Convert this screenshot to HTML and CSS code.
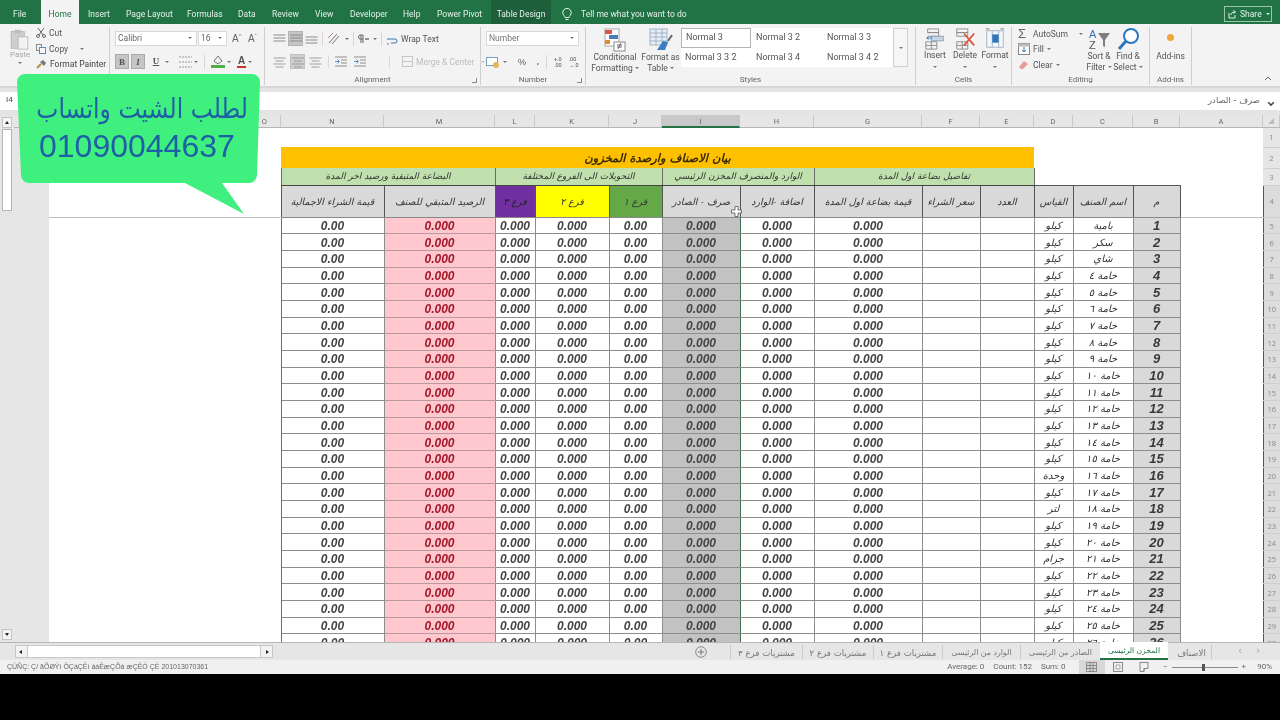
FILE: index.html
```html
<!DOCTYPE html>
<html lang="en">
<head>
<meta charset="utf-8">
<title>Excel</title>
<link rel="stylesheet" href="styles.css">
</head>
<body>
<svg class="defs" width="0" height="0">
  <symbol id="lines" viewBox="0 0 12 12"><path d="M0 2h12M2 5h8M0 8h12M2 11h8" stroke="#8a8a8a" fill="none"/></symbol>
  <symbol id="lines2" viewBox="0 0 12 12"><path d="M0 2h12M0 5h12M0 8h12" stroke="#8a8a8a" fill="none"/></symbol>
  <symbol id="indent" viewBox="0 0 12 12"><path d="M0 1h12M6 4h6M6 7h6M0 10h12" stroke="#777" fill="none"/><path d="M0 5.5h4M2.5 3.5l2 2-2 2" stroke="#2b78c2" fill="none"/></symbol>
</svg>
<div class="app">
  <header class="titlebar">
    <nav class="tabs">
      <span class="tab t-file">File</span>
      <span class="tab t-home">Home</span>
      <span class="tab t-ins">Insert</span>
      <span class="tab t-pl">Page Layout</span>
      <span class="tab t-fo">Formulas</span>
      <span class="tab t-da">Data</span>
      <span class="tab t-re">Review</span>
      <span class="tab t-vi">View</span>
      <span class="tab t-de">Developer</span>
      <span class="tab t-he">Help</span>
      <span class="tab t-pp">Power Pivot</span>
      <span class="tab t-td">Table Design</span>
      <svg class="bulb" width="10" height="13" viewBox="0 0 10 13"><path d="M3 9.5C2.6 7.8 .8 7 .8 4.6a4.2 4.2 0 0 1 8.4 0C9.200 7 7.400 7.800 7 9.500zM3.500 11.500h3" fill="none" stroke="#e8f2ec"/></svg>
      <span class="tell">Tell me what you want to do</span>
    </nav>
    <div class="share">
      <svg width="9" height="9" viewBox="0 0 9 9"><path d="M1 3v5h6V5M3 5c0-2 1-3 4-3M5.500.5L7.500 2 5.500 3.500" fill="none" stroke="#e8f2ec"/></svg>
      <span>Share</span><span class="caret-w"></span>
    </div>
  </header>

  <section class="ribbon">
    <div class="grp g-clip">
      <div class="grp-body clip-body">
        <div class="paste">
          <svg width="19" height="21" viewBox="0 0 21 24"><rect x="1" y="3" width="15" height="19" fill="#cfcfcf" stroke="#b5b5b5"/><rect x="5" y="1" width="7" height="4" fill="#bdbdbd"/><rect x="9" y="9" width="11" height="14" fill="#f2f2f2" stroke="#b9b9b9"/></svg>
          <span>Paste</span><i class="caret"></i>
        </div>
        <div class="clip-list">
          <div class="clip-item"><svg width="10" height="10" viewBox="0 0 10 10"><path d="M2 0l5 7M8 0L3 7" stroke="#666" fill="none"/><circle cx="2" cy="8" r="1.500" fill="none" stroke="#666"/><circle cx="8" cy="8" r="1.500" fill="none" stroke="#666"/></svg>Cut</div>
          <div class="clip-item"><svg width="10" height="10" viewBox="0 0 10 10"><rect x=".5" y=".5" width="5" height="6" fill="none" stroke="#8a8a8a"/><rect x="3.500" y="3.500" width="6" height="6" fill="#f6f6f6" stroke="#5f8db5"/></svg>Copy<i class="caret cc"></i></div>
          <div class="clip-item dark"><svg width="11" height="10" viewBox="0 0 11 10"><path d="M1 9l4-4" stroke="#b98a3a" stroke-width="2"/><path d="M4 3l3-2 3 3-2 3z" fill="#777"/></svg>Format Painter</div>
        </div>
      </div>
      <div class="grp-label"></div>
    </div>

    <div class="grp g-font">
      <div class="grp-body stack">
        <div class="fr">
          <div class="combo c-font">Calibri<i class="caret"></i></div>
          <div class="combo c-size">16<i class="caret"></i></div>
          <span class="aa">A<sup>^</sup></span><span class="aa a2">A<sup>ˇ</sup></span>
        </div>
        <div class="fr r2">
          <span class="bbtn on b">B</span><span class="bbtn on i">I</span><span class="bbtn u">U</span><i class="caret"></i>
          <svg class="bordicon" width="13" height="12" viewBox="0 0 13 12"><path d="M0 1h13M0 6h13M0 11h13" stroke="#999" stroke-dasharray="2 1" fill="none"/></svg><i class="caret"></i>
          <b class="vsep"></b>
          <svg class="fillicon" width="14" height="13" viewBox="0 0 14 13"><path d="M3 6l4-5 4 5-4 3z" fill="#f4f4f4" stroke="#777"/><rect x="0" y="10" width="14" height="3" fill="#4fb04a"/></svg><i class="caret"></i>
          <span class="fontcolor">A</span><i class="caret"></i>
        </div>
      </div>
      <div class="grp-label"></div>
    </div>

    <div class="grp g-align">
      <div class="grp-body stack">
        <div class="fr">
          <svg class="ic" width="13" height="12"><use href="#lines2"/></svg>
          <span class="sel"><svg width="12" height="12"><use href="#lines2"/></svg></span>
          <svg class="ic lower" width="13" height="12"><use href="#lines2"/></svg>
          <b class="vsep m"></b>
          <svg class="ic" width="14" height="13" viewBox="0 0 14 13"><path d="M2 11L10 2M5 12l7-8" stroke="#777" fill="none"/><path d="M1 6l5-5" stroke="#b178b0" fill="none"/></svg><i class="caret"></i>
          <b class="vsep m"></b>
          <svg class="ic" width="11" height="10" viewBox="0 0 11 10"><path d="M3 1v8M5 1v8M5 1H2.500a2 2 0 0 0 0 4H5" stroke="#666" fill="none"/><path d="M7 5h4" stroke="#333"/></svg><i class="caret m2"></i>
          <b class="vsep m"></b>
          <span class="wrap"><svg width="12" height="13" viewBox="0 0 12 13"><path d="M1 7h8a2 2 0 0 1 0 4H5" stroke="#3579b5" fill="none"/><path d="M1 12h2" stroke="#777"/></svg>Wrap Text</span>
        </div>
        <div class="fr r2 faded">
          <svg class="ic" width="13" height="12"><use href="#lines"/></svg>
          <span class="sel"><svg width="12" height="12"><use href="#lines"/></svg></span>
          <svg class="ic" width="13" height="12"><use href="#lines"/></svg>
          <b class="vsep m"></b>
          <svg class="ic" width="12" height="12"><use href="#indent"/></svg>
          <svg class="ic ind2" width="12" height="12"><use href="#indent"/></svg>
          <b class="vsep m3"></b>
          <span class="wrap merge"><svg width="11" height="11" viewBox="0 0 11 11"><rect x=".5" y=".5" width="10" height="10" fill="none" stroke="#bbb"/><path d="M0 5.500h11" stroke="#bbb"/></svg>Merge &amp; Center<i class="caret m4"></i></span>
        </div>
      </div>
      <div class="grp-label">Alignment<i class="launch"></i></div>
    </div>

    <div class="grp g-num">
      <div class="grp-body stack">
        <div class="fr"><div class="combo c-num">Number<i class="caret"></i></div></div>
        <div class="fr r2 numr">
          <svg width="14" height="12" viewBox="0 0 14 12"><rect x=".5" y="1.500" width="11" height="8" fill="#fff" stroke="#7aa0c0"/><circle cx="10" cy="9" r="3" fill="#e6b655"/></svg><i class="caret"></i>
          <span class="pct">%</span><span class="comma">,</span>
          <b class="vsep"></b>
          <span class="dec">+.0<br>.00</span><span class="dec">.00<br>→.0</span>
        </div>
      </div>
      <div class="grp-label">Number<i class="launch"></i></div>
    </div>

    <div class="grp g-styles">
      <div class="grp-body styles-body">
        <div class="big b-cf">
          <svg width="22" height="24" viewBox="0 0 22 24"><rect x="1" y="1" width="14" height="17" fill="#fff" stroke="#aaa"/><rect x="1" y="2" width="7" height="4" fill="#d9534f"/><rect x="5" y="7" width="9" height="4" fill="#4a7ebb"/><rect x="1" y="12" width="5" height="4" fill="#e08a3a"/><rect x="10" y="14" width="11" height="9" fill="#fff" stroke="#888"/><path d="M13 19h5M13 17h5M14 21l3-6" stroke="#333" stroke-width=".7"/></svg>
          <span>Conditional<br>Formatting <i class="caret inl"></i></span>
        </div>
        <div class="big b-ft">
          <svg width="24" height="24" viewBox="0 0 24 24"><rect x="1" y="1" width="17" height="16" fill="#e8eef5" stroke="#9fb3c8"/><path d="M1 5h17M1 9h17M1 13h17M7 1v16M13 1v16" stroke="#9fb3c8"/><path d="M8 22l6-9 5 1-3 8z" fill="#3c7fc0"/><path d="M19 13l4-6" stroke="#666" stroke-width="2"/></svg>
          <span>Format as<br>Table <i class="caret inl"></i></span>
        </div>
        <div class="gallery">
          <span class="st on">Normal 3</span><span class="st">Normal 3 2</span><span class="st">Normal 3 3</span>
          <span class="st">Normal 3 3 2</span><span class="st">Normal 3 4</span><span class="st">Normal 3 4 2</span>
        </div>
        <div class="gal-more"><i class="caret"></i></div>
      </div>
      <div class="grp-label">Styles</div>
    </div>

    <div class="grp g-cells">
      <div class="grp-body cells-body">
        <div class="big c3"><svg width="22" height="22" viewBox="0 0 22 24"><path d="M3 1h12v4H3zM3 5h12v4H3M1 15h12v8H1zM7 15v8M1 19h12" fill="none" stroke="#8a8a8a"/><rect x="7" y="9" width="13" height="5" fill="#c9d6e3" stroke="#8a9fb3"/><path d="M2 11h6M4 9.500l-2 1.500 2 1.500" stroke="#2d78bd" fill="none"/></svg><span>Insert</span><i class="caret"></i></div>
        <div class="big c3"><svg width="24" height="22" viewBox="0 0 24 24"><path d="M3 1h12v4H3zM3 5h12v4H3zM3 15h12v8H3zM9 15v8M3 19h12" fill="none" stroke="#8a8a8a"/><path d="M11 6l11 13M22 6L11 19" stroke="#d9573b" stroke-width="2"/></svg><span>Delete</span><i class="caret"></i></div>
        <div class="big c3"><svg width="22" height="22" viewBox="0 0 22 24"><rect x="2" y="3" width="18" height="18" fill="#f4f7fa" stroke="#9fb3c8"/><path d="M8 3v18M15 3v18" stroke="#9fb3c8"/><rect x="8" y="7" width="7" height="9" fill="#2f76b9"/><path d="M1 1h4M17 1h4" stroke="#777"/></svg><span>Format</span><i class="caret"></i></div>
      </div>
      <div class="grp-label">Cells</div>
    </div>

    <div class="grp g-edit">
      <div class="grp-body edit-body">
        <div class="edit-list">
          <div class="clip-item"><span class="sigma">Σ</span>AutoSum<i class="caret auto"></i></div>
          <div class="clip-item"><svg width="12" height="12" viewBox="0 0 12 12"><rect x=".5" y=".5" width="11" height="11" fill="#fff" stroke="#888"/><rect x=".5" y=".5" width="11" height="3" fill="#bbb"/><path d="M6 4v5M4 7l2 2 2-2" stroke="#2d78bd" fill="none"/></svg>Fill<i class="caret"></i></div>
          <div class="clip-item"><svg width="12" height="10" viewBox="0 0 12 10"><path d="M1 7l5-6 4 3-5 5H3z" fill="#e79a9a"/></svg>Clear<i class="caret"></i></div>
        </div>
        <div class="big sort"><svg class="sorticon" width="22" height="24" viewBox="0 0 22 24"><text x="1" y="11" class="az a">A</text><text x="1" y="22" class="az z">Z</text><path d="M10 6h12l-5 7v7l-2-1v-6z" fill="#7f7f7f"/></svg><span>Sort &amp;<br>Filter <i class="caret inl"></i></span></div>
        <div class="big find"><svg width="24" height="24" viewBox="0 0 24 24"><circle cx="15" cy="9" r="7" fill="#fff" stroke="#2d78bd" stroke-width="2"/><path d="M10 14l-7 8" stroke="#2d78bd" stroke-width="3"/></svg><span>Find &amp;<br>Select <i class="caret inl"></i></span></div>
      </div>
      <div class="grp-label">Editing</div>
    </div>

    <div class="grp g-add">
      <div class="grp-body add-body"><i class="dot"></i><span>Add-ins</span></div>
      <div class="grp-label">Add-ins</div>
    </div>
    <div class="collapse">
      <svg width="8" height="5" viewBox="0 0 8 5"><path d="M1 4l3-3 3 3" fill="none" stroke="#666"/></svg>
    </div>
  </section>

  <div class="formula">
    <span class="namebox">I4</span>
    <span class="fx" dir="rtl">صرف - الصادر</span>
    <svg width="7" height="5" viewBox="0 0 7 5"><path d="M1 1l2.500 2.500L6 1" fill="none" stroke="#444" stroke-width="1.300"/></svg>
  </div>

  <div class="work">
    <aside class="vscroll">
      <span class="sb-btn"><i class="tri up"></i></span>
      <span class="thumb"></span>
      <span class="sb-btn end"><i class="tri down"></i></span>
    </aside>
    <div class="gridwrap">
      <div class="colhead">
        <span class="ch w-blank"><em>O</em></span>
        <span class="ch w-n">N</span><span class="ch w-m">M</span><span class="ch w-l">L</span><span class="ch w-k">K</span><span class="ch w-j">J</span>
        <span class="ch w-i active">I</span>
        <span class="ch w-h">H</span><span class="ch w-g">G</span><span class="ch w-f">F</span><span class="ch w-e">E</span><span class="ch w-d">D</span><span class="ch w-c">C</span><span class="ch w-b">B</span><span class="ch w-a">A</span>
        <span class="ch w-r"><i class="corner"></i></span>
      </div>
      <div class="sheet">
        <table class="tbl">
          <colgroup>
            <col class="k-gray"><col class="k-blank"><col class="k-n"><col class="k-m"><col class="k-l"><col class="k-k"><col class="k-j"><col class="k-i"><col class="k-h"><col class="k-g"><col class="k-f"><col class="k-e"><col class="k-d"><col class="k-c"><col class="k-b"><col class="k-a"><col class="k-r">
          </colgroup>
          <tbody>
            <tr class="r1"><td class="gray"></td><td colspan="15"></td><td class="rh">1</td></tr>
            <tr class="r2"><td class="gray"></td><td></td><td class="title" colspan="10" dir="rtl">بيان الاصناف وارصدة المخزون</td><td colspan="4"></td><td class="rh">2</td></tr>
            <tr class="r3"><td class="gray"></td><td></td><td class="sub" colspan="2" dir="rtl">البضاعة المتبقية ورصيد اخر المدة</td><td class="sub" colspan="3" dir="rtl">التحويلات الى الفروع المختلفة</td><td class="sub" colspan="2" dir="rtl">الوارد والمنصرف المخزن الرئيسي</td><td class="sub" colspan="3" dir="rtl">تفاصيل بضاعة اول المدة</td><td colspan="4"></td><td class="rh">3</td></tr>
            <tr class="r4"><td class="gray"></td><td class="fz"></td><td class="hd" dir="rtl">قيمة الشراء الاجمالية</td><td class="hd" dir="rtl">الرصيد المتبقي للصنف</td><td class="hd purple" dir="rtl">فرع ٣</td><td class="hd yellow" dir="rtl">فرع ٢</td><td class="hd green" dir="rtl">فرع ١</td><td class="hd" dir="rtl">صرف - الصادر</td><td class="hd" dir="rtl">اضافة -الوارد</td><td class="hd" dir="rtl">قيمة بضاعة اول المدة</td><td class="hd" dir="rtl">سعر الشراء</td><td class="hd" dir="rtl">العدد</td><td class="hd" dir="rtl">القياس</td><td class="hd" dir="rtl">اسم الصنف</td><td class="hd" dir="rtl">م</td><td class="fz"></td><td class="rh sl">4</td></tr>
            <tr class="d"><td class="gray"></td><td></td><td>0.00</td><td>0.000</td><td>0.000</td><td>0.000</td><td>0.00</td><td>0.000</td><td>0.000</td><td>0.000</td><td></td><td></td><td dir="rtl">كيلو</td><td dir="rtl">بامية</td><td>1</td><td></td><td class="rh sl">5</td></tr>
            <tr class="d"><td class="gray"></td><td></td><td>0.00</td><td>0.000</td><td>0.000</td><td>0.000</td><td>0.00</td><td>0.000</td><td>0.000</td><td>0.000</td><td></td><td></td><td dir="rtl">كيلو</td><td dir="rtl">سكر</td><td>2</td><td></td><td class="rh sl">6</td></tr>
            <tr class="d"><td class="gray"></td><td></td><td>0.00</td><td>0.000</td><td>0.000</td><td>0.000</td><td>0.00</td><td>0.000</td><td>0.000</td><td>0.000</td><td></td><td></td><td dir="rtl">كيلو</td><td dir="rtl">شاي</td><td>3</td><td></td><td class="rh sl">7</td></tr>
            <tr class="d"><td class="gray"></td><td></td><td>0.00</td><td>0.000</td><td>0.000</td><td>0.000</td><td>0.00</td><td>0.000</td><td>0.000</td><td>0.000</td><td></td><td></td><td dir="rtl">كيلو</td><td dir="rtl">خامة ٤</td><td>4</td><td></td><td class="rh sl">8</td></tr>
            <tr class="d"><td class="gray"></td><td></td><td>0.00</td><td>0.000</td><td>0.000</td><td>0.000</td><td>0.00</td><td>0.000</td><td>0.000</td><td>0.000</td><td></td><td></td><td dir="rtl">كيلو</td><td dir="rtl">خامة ٥</td><td>5</td><td></td><td class="rh sl">9</td></tr>
            <tr class="d"><td class="gray"></td><td></td><td>0.00</td><td>0.000</td><td>0.000</td><td>0.000</td><td>0.00</td><td>0.000</td><td>0.000</td><td>0.000</td><td></td><td></td><td dir="rtl">كيلو</td><td dir="rtl">خامة ٦</td><td>6</td><td></td><td class="rh sl">10</td></tr>
            <tr class="d"><td class="gray"></td><td></td><td>0.00</td><td>0.000</td><td>0.000</td><td>0.000</td><td>0.00</td><td>0.000</td><td>0.000</td><td>0.000</td><td></td><td></td><td dir="rtl">كيلو</td><td dir="rtl">خامة ٧</td><td>7</td><td></td><td class="rh sl">11</td></tr>
            <tr class="d"><td class="gray"></td><td></td><td>0.00</td><td>0.000</td><td>0.000</td><td>0.000</td><td>0.00</td><td>0.000</td><td>0.000</td><td>0.000</td><td></td><td></td><td dir="rtl">كيلو</td><td dir="rtl">خامة ٨</td><td>8</td><td></td><td class="rh sl">12</td></tr>
            <tr class="d"><td class="gray"></td><td></td><td>0.00</td><td>0.000</td><td>0.000</td><td>0.000</td><td>0.00</td><td>0.000</td><td>0.000</td><td>0.000</td><td></td><td></td><td dir="rtl">كيلو</td><td dir="rtl">خامة ٩</td><td>9</td><td></td><td class="rh sl">13</td></tr>
            <tr class="d"><td class="gray"></td><td></td><td>0.00</td><td>0.000</td><td>0.000</td><td>0.000</td><td>0.00</td><td>0.000</td><td>0.000</td><td>0.000</td><td></td><td></td><td dir="rtl">كيلو</td><td dir="rtl">خامة ١٠</td><td>10</td><td></td><td class="rh sl">14</td></tr>
            <tr class="d"><td class="gray"></td><td></td><td>0.00</td><td>0.000</td><td>0.000</td><td>0.000</td><td>0.00</td><td>0.000</td><td>0.000</td><td>0.000</td><td></td><td></td><td dir="rtl">كيلو</td><td dir="rtl">خامة ١١</td><td>11</td><td></td><td class="rh sl">15</td></tr>
            <tr class="d"><td class="gray"></td><td></td><td>0.00</td><td>0.000</td><td>0.000</td><td>0.000</td><td>0.00</td><td>0.000</td><td>0.000</td><td>0.000</td><td></td><td></td><td dir="rtl">كيلو</td><td dir="rtl">خامة ١٢</td><td>12</td><td></td><td class="rh sl">16</td></tr>
            <tr class="d"><td class="gray"></td><td></td><td>0.00</td><td>0.000</td><td>0.000</td><td>0.000</td><td>0.00</td><td>0.000</td><td>0.000</td><td>0.000</td><td></td><td></td><td dir="rtl">كيلو</td><td dir="rtl">خامة ١٣</td><td>13</td><td></td><td class="rh sl">17</td></tr>
            <tr class="d"><td class="gray"></td><td></td><td>0.00</td><td>0.000</td><td>0.000</td><td>0.000</td><td>0.00</td><td>0.000</td><td>0.000</td><td>0.000</td><td></td><td></td><td dir="rtl">كيلو</td><td dir="rtl">خامة ١٤</td><td>14</td><td></td><td class="rh sl">18</td></tr>
            <tr class="d"><td class="gray"></td><td></td><td>0.00</td><td>0.000</td><td>0.000</td><td>0.000</td><td>0.00</td><td>0.000</td><td>0.000</td><td>0.000</td><td></td><td></td><td dir="rtl">كيلو</td><td dir="rtl">خامة ١٥</td><td>15</td><td></td><td class="rh sl">19</td></tr>
            <tr class="d"><td class="gray"></td><td></td><td>0.00</td><td>0.000</td><td>0.000</td><td>0.000</td><td>0.00</td><td>0.000</td><td>0.000</td><td>0.000</td><td></td><td></td><td dir="rtl">وحدة</td><td dir="rtl">خامة ١٦</td><td>16</td><td></td><td class="rh sl">20</td></tr>
            <tr class="d"><td class="gray"></td><td></td><td>0.00</td><td>0.000</td><td>0.000</td><td>0.000</td><td>0.00</td><td>0.000</td><td>0.000</td><td>0.000</td><td></td><td></td><td dir="rtl">كيلو</td><td dir="rtl">خامة ١٧</td><td>17</td><td></td><td class="rh sl">21</td></tr>
            <tr class="d"><td class="gray"></td><td></td><td>0.00</td><td>0.000</td><td>0.000</td><td>0.000</td><td>0.00</td><td>0.000</td><td>0.000</td><td>0.000</td><td></td><td></td><td dir="rtl">لتر</td><td dir="rtl">خامة ١٨</td><td>18</td><td></td><td class="rh sl">22</td></tr>
            <tr class="d"><td class="gray"></td><td></td><td>0.00</td><td>0.000</td><td>0.000</td><td>0.000</td><td>0.00</td><td>0.000</td><td>0.000</td><td>0.000</td><td></td><td></td><td dir="rtl">كيلو</td><td dir="rtl">خامة ١٩</td><td>19</td><td></td><td class="rh sl">23</td></tr>
            <tr class="d"><td class="gray"></td><td></td><td>0.00</td><td>0.000</td><td>0.000</td><td>0.000</td><td>0.00</td><td>0.000</td><td>0.000</td><td>0.000</td><td></td><td></td><td dir="rtl">كيلو</td><td dir="rtl">خامة ٢٠</td><td>20</td><td></td><td class="rh sl">24</td></tr>
            <tr class="d"><td class="gray"></td><td></td><td>0.00</td><td>0.000</td><td>0.000</td><td>0.000</td><td>0.00</td><td>0.000</td><td>0.000</td><td>0.000</td><td></td><td></td><td dir="rtl">جرام</td><td dir="rtl">خامة ٢١</td><td>21</td><td></td><td class="rh sl">25</td></tr>
            <tr class="d"><td class="gray"></td><td></td><td>0.00</td><td>0.000</td><td>0.000</td><td>0.000</td><td>0.00</td><td>0.000</td><td>0.000</td><td>0.000</td><td></td><td></td><td dir="rtl">كيلو</td><td dir="rtl">خامة ٢٢</td><td>22</td><td></td><td class="rh sl">26</td></tr>
            <tr class="d"><td class="gray"></td><td></td><td>0.00</td><td>0.000</td><td>0.000</td><td>0.000</td><td>0.00</td><td>0.000</td><td>0.000</td><td>0.000</td><td></td><td></td><td dir="rtl">كيلو</td><td dir="rtl">خامة ٢٣</td><td>23</td><td></td><td class="rh sl">27</td></tr>
            <tr class="d"><td class="gray"></td><td></td><td>0.00</td><td>0.000</td><td>0.000</td><td>0.000</td><td>0.00</td><td>0.000</td><td>0.000</td><td>0.000</td><td></td><td></td><td dir="rtl">كيلو</td><td dir="rtl">خامة ٢٤</td><td>24</td><td></td><td class="rh sl">28</td></tr>
            <tr class="d"><td class="gray"></td><td></td><td>0.00</td><td>0.000</td><td>0.000</td><td>0.000</td><td>0.00</td><td>0.000</td><td>0.000</td><td>0.000</td><td></td><td></td><td dir="rtl">كيلو</td><td dir="rtl">خامة ٢٥</td><td>25</td><td></td><td class="rh sl">29</td></tr>
            <tr class="d"><td class="gray"></td><td></td><td>0.00</td><td>0.000</td><td>0.000</td><td>0.000</td><td>0.00</td><td>0.000</td><td>0.000</td><td>0.000</td><td></td><td></td><td dir="rtl">كيلو</td><td dir="rtl">خامة ٢٦</td><td>26</td><td></td><td class="rh sl">30</td></tr>
          </tbody>
        </table>
      </div>
    </div>
  </div>

  <div class="tabbar">
    <div class="hscroll"><i class="tri left"></i><span class="track"></span><i class="tri right"></i></div>
    <div class="sheets">
      <svg class="plus" width="12" height="12" viewBox="0 0 12 12"><circle cx="6" cy="6" r="5.300" fill="none" stroke="#8a8a8a"/><path d="M3 6h6M6 3v6" stroke="#777"/></svg>
      <span class="stab s1" dir="rtl">مشتريات فرع ٣</span>
      <span class="stab s2" dir="rtl">مشتريات فرع ٢</span>
      <span class="stab s3" dir="rtl">مشتريات فرع ١</span>
      <span class="stab s4" dir="rtl">الوارد من الرئيسى</span>
      <span class="stab s5" dir="rtl">الصادر من الرئيسى</span>
      <span class="stab s6 act" dir="rtl">المخزن الرئيسى</span>
      <span class="stab s7" dir="rtl">الاصناف</span>
      <span class="nav n1">‹</span><span class="nav">›</span>
    </div>
  </div>

  <footer class="status">
    <span class="st-msg">ÇÚÑÇ: Ç/ ãÕØÝì ÔÇáÇÊí ááÊæÇÕá æÇÊÓ ÇÈ 201013070361</span>
    <div class="st-right">
      <span>Average: 0</span><span>Count: 152</span><span>Sum: 0</span>
      <span class="view on"><svg width="11" height="10" viewBox="0 0 11 10"><path d="M.5.500h10v9H.5zM.5 3.500h10M.5 6.500h10M4 .5v9M7 .5v9" fill="none" stroke="#777" stroke-width=".8"/></svg></span>
      <span class="view"><svg width="10" height="10" viewBox="0 0 10 10"><path d="M.5.500h9v9h-9z" fill="none" stroke="#888"/><path d="M3 3h4v4H3z" fill="none" stroke="#aaa"/></svg></span>
      <span class="view"><svg width="10" height="10" viewBox="0 0 10 10"><path d="M1 .5h8v6H5v3H1zM5 6.500v3" fill="none" stroke="#888"/></svg></span>
      <span class="zoomctl">−<span class="slider"><i></i></span>+</span>
      <span class="pctz">90%</span>
    </div>
  </footer>

  <svg class="cursor" width="11" height="11" viewBox="0 0 11 11"><path d="M4 .5h3v3.500h3.500v3H7v3.500H4V7H.5V4H4z" fill="#fff" stroke="#555" stroke-width=".8"/></svg>

  <aside class="bubble">
    <svg class="bubble-shape" width="246" height="142" viewBox="0 0 246 142"><path d="M8 0H235a8 8 0 0 1 8 8L240 101a8 8 0 0 1-8 8H205L227 140 168 109H12a8 8 0 0 1-8-8L0 8a8 8 0 0 1 8-8z" fill="#3ff07e"/></svg>
    <p class="b-ar" dir="rtl">لطلب الشيت واتساب</p>
    <p class="b-num">01090044637</p>
  </aside>
</div>
</body>
</html>
```

FILE: styles.css
```css
* { box-sizing: border-box; }
html, body { margin: 0; padding: 0; background: #000; }
body { width: 1280px; height: 720px; overflow: hidden; font-family: Roboto, "Liberation Sans", sans-serif; }
.defs { position: absolute; }
.app { position: relative; width: 1280px; height: 674px; background: #f0f0f0; display: flex; flex-direction: column; overflow: hidden; filter: blur(.35px); color: #444; }

/* title bar */
.titlebar { height: 24px; background: #217346; display: flex; justify-content: space-between; flex: none; }
.tabs { display: flex; align-items: stretch; }
.tab { color: #e6f0ea; font-size: 8.5px; line-height: 20px; padding-top: 4px; white-space: nowrap; }
.t-file { margin-left: 13px; width: 28px; }
.t-home { background: #f3f3f3; color: #217346; width: 38px; text-align: center; }
.t-ins { margin-left: 9px; width: 38px; }
.t-pl { width: 61px; }
.t-fo { width: 51px; }
.t-da { width: 34px; }
.t-re { width: 43px; }
.t-vi { width: 35px; }
.t-de { width: 53px; }
.t-he { width: 34px; }
.t-pp { width: 54px; }
.t-td { background: #1d5e3b; width: 60px; text-align: center; }
.bulb { margin: 8px 0 0 11px; }
.tell { color: #e6f0ea; font-size: 8.5px; line-height: 20px; padding-top: 4px; margin-left: 9px; }
.share { margin: 6px 8px 0 0; width: 48px; height: 16px; border: 1px solid #9cc4ad; color: #e6f0ea; font-size: 8.5px; display: flex; align-items: center; gap: 3px; padding-left: 3px; }
.caret-w { border: 2px solid transparent; border-top-color: #e6f0ea; margin-top: 2px; margin-left: 1px; }

/* ribbon */
.ribbon { height: 62px; background: #f3f3f3; display: flex; flex: none; font-size: 8.5px; color: #555; }
.grp { display: flex; flex-direction: column; border-right: 1px solid #cfcfcf; margin: 3px 0 1px; height: 58px; }
.g-clip { width: 110px; margin-right: 0; }
.g-font { width: 155px; }
.g-align { width: 216px; }
.g-num { width: 105px; }
.g-styles { width: 330px; }
.g-cells { width: 96px; }
.g-edit { width: 138px; }
.g-add { width: 42px; }
.grp-body { flex: 1; min-height: 0; }
.grp-label { height: 10px; text-align: center; font-size: 8px; line-height: 10px; color: #666; position: relative; }
.launch { position: absolute; right: 3px; top: 3px; width: 5px; height: 5px; border-right: 1px solid #888; border-bottom: 1px solid #888; }
.caret { display: inline-block; border: 2px solid transparent; border-top: 2.500px solid #777; border-bottom: 0; width: 0; height: 0; }
.caret.inl { vertical-align: middle; }

.clip-body { display: flex; padding-left: 10px; }
.paste { width: 26px; display: flex; flex-direction: column; align-items: flex-start; padding-top: 2px; color: #a8a8a8; font-size: 8px; line-height: 9px; }
.paste .caret { margin: 3px 0 0 8px; }
.clip-list { display: flex; flex-direction: column; gap: 3.500px; }
.clip-item { display: flex; align-items: center; gap: 3px; height: 12px; white-space: nowrap; font-size: 8.500px; }
.clip-item.dark { color: #444; }
.cc { margin-left: 9px; }
.g-clip .clip-item { gap: 3px; }

.stack { display: flex; flex-direction: column; gap: 5px; padding-top: 4px; }
.fr { display: flex; align-items: center; height: 15px; flex: none; }
.g-font .fr { padding-left: 5px; }
.combo { background: #fff; border: 1px solid #d8d8d8; height: 15px; line-height: 13px; font-size: 8.500px; padding-left: 2px; position: relative; color: #666; }
.combo .caret { position: absolute; right: 4px; top: 5px; }
.c-font { width: 82px; }
.c-size { width: 29px; margin-left: 1px; }
.c-num { width: 93px; color: #777; }
.aa { font-size: 10px; margin-left: 5px; width: 10px; color: #666; font-family: "Liberation Sans", sans-serif; }
.aa.a2 { margin-left: 6px; }
.aa sup { font-size: 6px; line-height: 0; color: #c05a2e; }
.r2 { gap: 2px; }
.bbtn { width: 14px; height: 15px; font-family: "Liberation Serif", serif; font-size: 9px; text-align: center; line-height: 14px; color: #555; }
.bbtn.on { background: #c6c6c6; border: 1px solid #ababab; }
.bbtn.b { font-weight: 700; }
.bbtn.i { font-style: italic; font-weight: 700; }
.bbtn.u { text-decoration: underline; font-weight: 700; margin-left: 2px; }
.bordicon { margin-left: 8px; }
.vsep { width: 1px; height: 14px; background: #d6d6d6; margin: 0 4px; flex: none; }
.fillicon { margin-left: 0; }
.fontcolor { font-family: "Liberation Sans", sans-serif; font-size: 10px; font-weight: 700; color: #555; border-bottom: 2.500px solid #c9312d; line-height: 10px; margin-left: 4px; padding: 0 1px; }

.g-align .fr { padding-left: 8px; }
.ic { flex: none; }
.ic.lower { margin-top: 4px; }
.sel { width: 15px; height: 15px; background: #c6c6c6; border: 1px solid #b4b4b4; display: flex; align-items: center; justify-content: center; margin: 0 2px; flex: none; }
.vsep.m { margin: 0 4px; }
.vsep.m3 { margin: 0 10px 0 21px; }
.ind2 { margin-left: 5px; }
.m2 { margin-left: 4px; }
.g-align .fr .caret { margin-left: 4px; }
.wrap { display: flex; align-items: center; gap: 3px; white-space: nowrap; font-size: 8.500px; color: #555; }
.merge { color: #b0b0b0; }
.merge .m4 { margin-left: 6px; border-top-color: #bbb; }
.faded { opacity: .8; }

.g-num .fr { padding-left: 5px; }
.numr { gap: 3px; font-size: 8px; }
.pct { font-size: 9px; margin-left: 8px; font-family: "Liberation Sans", sans-serif; }
.comma { margin-left: 8px; font-weight: 700; }
.dec { font-size: 5.500px; line-height: 6px; margin-right: 4px; }

.styles-body { display: flex; padding: 1px 0 0 4px; }
.big { display: flex; flex-direction: column; align-items: center; text-align: center; font-size: 8.500px; line-height: 10.500px; color: #555; white-space: nowrap; }
.big svg { flex: none; }
.b-cf { width: 50px; }
.b-ft { width: 41px; }
.gallery { width: 212px; height: 39px; background: #fff; display: grid; grid-template-columns: repeat(3, 71px); grid-template-rows: 20px 19px; font-size: 9px; color: #555; flex: none; }
.st { padding-left: 4px; line-height: 19px; white-space: nowrap; }
.st.on { border: 1px solid #b5b5b5; width: 70px; line-height: 17px; padding-left: 4px; }
.gal-more { width: 15px; height: 39px; border: 1px solid #cfcfcf; display: flex; align-items: center; justify-content: center; background: #f6f6f6; flex: none; }

.cells-body { display: flex; padding: 1px 0 0 4px; }
.c3 { width: 30px; gap: 0; }
.c3 .caret { margin-top: 5px; }
.edit-body { display: flex; padding: 0 0 0 6px; }
.edit-list { width: 66px; display: flex; flex-direction: column; gap: 2.500px; }
.edit-list .clip-item { font-size: 8.500px; color: #555; height: 13px; }
.sigma { font-family: "Liberation Sans", sans-serif; font-size: 13px; line-height: 12px; color: #666; width: 12px; }
.auto { margin-left: 8px; }
.sort { width: 30px; }
.find { width: 34px; margin-left: -3px; }
.az { font-family: "Liberation Sans", sans-serif; font-size: 11px; font-weight: 400; }
.az.a { fill: #3573b5; }
.az.z { fill: #555; }
.add-body { display: flex; flex-direction: column; align-items: center; gap: 10px; padding-top: 7px; font-size: 8.500px; }
.dot { width: 7px; height: 7px; border-radius: 50%; background: #f0a53a; }
.collapse { flex: 1; display: flex; justify-content: flex-end; align-items: flex-end; padding: 0 8px 5px 0; }

/* formula bar */
.formula { height: 29px; flex: none; background: #e4e4e4; border-top: 2px solid #d6d6d6; padding: 4px 0 5px; display: flex; align-items: stretch; }
.namebox { width: 60px; background: #fff; font-size: 8px; padding: 3px 0 0 6px; }
.fx { flex: 1; background: #fff; font-size: 8.500px; line-height: 17px; color: #666; padding-right: 2px; font-family: "DejaVu Sans", sans-serif; }
.formula svg { background: #fff; width: 18px; padding: 6px 5px 0 5px; height: 18px; }

/* sheet */
.work { flex: 1; min-height: 0; display: flex; }
.vscroll { width: 14px; background: #e6e6e6; position: relative; flex: none; display: flex; flex-direction: column; align-items: center; padding: 2px 0; }
.sb-btn { width: 10px; height: 11px; background: #f4f4f4; border: 1px solid #c4c4c4; display: flex; align-items: center; justify-content: center; flex: none; }
.thumb { width: 10px; height: 82px; background: #fff; border: 1px solid #b5b5b5; margin-top: 1px; flex: none; }
.sb-btn.end { margin-top: auto; }
.tri { display: block; width: 0; height: 0; border: 2.500px solid transparent; }
.tri.up { border-bottom: 3px solid #222; border-top: 0; }
.tri.down { border-top: 3px solid #222; border-bottom: 0; }
.gridwrap { flex: 1; min-width: 0; display: flex; flex-direction: column; }
.colhead { height: 13px; background: #e6e6e6; border-bottom: 1px solid #b5b5b5; display: flex; flex: none; font-size: 7.500px; color: #666; line-height: 13px; }
.ch { text-align: center; border-right: 1px solid #c8c8c8; position: relative; flex: none; }
.ch em { font-style: normal; position: absolute; right: 13px; }
.ch.active { background: #c8c8c8; border-bottom: 2px solid #217346; height: 13px; }
.w-blank { width: 267px; }
.w-n { width: 103px; } .w-m { width: 111px; } .w-l { width: 40px; } .w-k { width: 74px; } .w-j { width: 53px; } .w-i { width: 78px; } .w-h { width: 74px; } .w-g { width: 108px; } .w-f { width: 58px; } .w-e { width: 54px; } .w-d { width: 39px; } .w-c { width: 60px; } .w-b { width: 47px; } .w-a { width: 83px; } .w-r { width: 17px; }
.corner { position: absolute; right: 5px; top: 3px; border: 3px solid transparent; border-right-color: #bbb; border-bottom-color: #bbb; }
.sheet { flex: 1; min-height: 0; overflow: hidden; background: #fff; }

.tbl { width: 1266px; table-layout: fixed; border-collapse: collapse; font-family: "DejaVu Sans", sans-serif; color: #333; }
.k-gray { width: 35px; } .k-blank { width: 232px; } .k-n { width: 103px; } .k-m { width: 111px; } .k-l { width: 40px; } .k-k { width: 74px; } .k-j { width: 53px; } .k-i { width: 78px; } .k-h { width: 74px; } .k-g { width: 108px; } .k-f { width: 58px; } .k-e { width: 54px; } .k-d { width: 39px; } .k-c { width: 60px; } .k-b { width: 47px; } .k-a { width: 83px; } .k-r { width: 17px; }
.tbl td { padding: 0; overflow: hidden; white-space: nowrap; text-align: center; }
.r1 { height: 19px; }
.r2 { height: 21px; }
.r3 { height: 17px; }
.r4 { height: 32px; }
.d { height: 16.680px; }
.gray { background: #e6e6e6; }
.rh { background: #e6e6e6; color: #888; font: 7.500px "Open Sans", sans-serif; border-bottom: 1px solid #cfcfcf; }
.tbl .rh.sl { background: #dcdcdc; border-left: 1.500px solid #217346; }
.title { background: #ffc000; font-size: 11.500px; font-weight: 700; font-style: italic; color: #3a2c00; padding-top: 2px; }
.sub { background: #c0e0ae; font-size: 9px; font-style: italic; color: #333; border-left: 1px solid #6a6a6a; border-right: 1px solid #6a6a6a; border-bottom: 1px solid #444; }
.hd { background: #d9d9d9; font-size: 9.500px; font-style: italic; color: #333; border: 1px solid #555; border-bottom-color: #888; }
.hd.purple { background: #7030a0; color: #222; }
.hd.yellow { background: #ffff00; }
.hd.green { background: #65a848; }
.fz { border-bottom: 1px solid #bdbdbd; }

.d td { border-bottom: 1px solid #8d8d8d; font-family: "Liberation Sans", sans-serif; font-size: 12px; font-weight: 700; font-style: italic; line-height: 14px; color: #444; border-right: 1px solid #8d8d8d; }
.tbl .d td { padding-top: 1px; }
.d td:nth-child(1), .d td:nth-child(2), .d td:nth-child(16), .d td:nth-child(17) { border-bottom: 0; border-right: 0; }
.d td:nth-child(2) { border-right: 1px solid #6d6d6d; }
.d td:nth-child(4) { background: #ffc7ce; color: #a0182a; border-bottom-color: #b9999d; }
.d td:nth-child(8) { background: #c2c2c2; border-left: 1px solid #3f6f4f; border-right: 1px solid #3f6f4f; }
.d td:nth-child(13), .d td:nth-child(14) { font-family: "DejaVu Sans", sans-serif; font-weight: 400; font-size: 10px; color: #333; }
.d td:nth-child(15) { background: #d9d9d9; font-size: 13px; color: #3a3a3a; border-left: 1px solid #555; border-right: 1px solid #8d8d8d; }
.d td.rh { font: 7.500px "Open Sans", sans-serif; color: #888; border-bottom: 1px solid #cfcfcf; }

/* sheet tabs */
.tabbar { height: 18px; flex: none; background: #e6e6e6; border-top: 1px solid #b5b5b5; display: flex; }
.hscroll { margin: 2px 0 0 15px; width: 258px; height: 13px; display: flex; align-items: center; justify-content: space-between; padding: 0 3px; border: 1px solid #c8c8c8; background: #f2f2f2; flex: none; }
.track { flex: 1; height: 11px; background: #fff; margin: 0 5px; border-left: 1px solid #c8c8c8; border-right: 1px solid #c8c8c8; }
.tri.left { border-right: 3px solid #222; border-left: 0; }
.tri.right { border-left: 3px solid #222; border-right: 0; }
.sheets { flex: 1; display: flex; align-items: stretch; font-family: "DejaVu Sans", sans-serif; font-size: 8.600px; color: #777; padding-left: 422px; }
.plus { margin: 3px 23px 0 0; flex: none; }
.stab { text-align: center; line-height: 16px; border-left: 1px solid #cacaca; flex: none; white-space: nowrap; height: 14px; margin-top: 2px; }
.s1 { width: 72px; } .s2 { width: 71px; } .s3 { width: 69px; } .s4 { width: 78px; font-size: 7.800px; } .s5 { width: 80px; font-size: 7.800px; }
.s6.act { width: 68px; height: 18px; margin-top: -1px; background: #fff; color: #217346; border-bottom: 2px solid #217346; border-left: 0; line-height: 17px; font-weight: 400; font-size: 7.600px; }
.s7 { width: 40px; border-left: 0; border-right: 1px solid #cacaca; margin-left: 4px; }
.nav { width: 18px; text-align: center; line-height: 15px; color: #aaa; font-size: 10px; }
.n1 { margin-left: 19px; }

/* status */
.status { height: 14px; flex: none; background: #f0f0f0; display: flex; justify-content: space-between; font-size: 8px; color: #666; line-height: 14px; padding-left: 7px; }
.st-msg { font-family: "Liberation Sans", sans-serif; font-size: 7px; }
.st-right { display: flex; align-items: center; gap: 9px; padding-right: 8px; }
.view { width: 26px; height: 14px; display: flex; align-items: center; justify-content: center; margin: 0 -4.500px; }
.view.on { background: #d8d8d8; margin-left: 4px; }
.zoomctl { display: flex; align-items: center; gap: 4px; margin-left: 2px; }
.slider { width: 66px; height: 1px; background: #888; position: relative; }
.slider i { position: absolute; left: 30px; top: -3px; width: 3px; height: 7px; background: #555; }
.pctz { margin-left: 2px; }

/* overlays */
.cursor { position: absolute; left: 731px; top: 206px; }
.bubble { position: absolute; left: 17px; top: 74px; width: 246px; height: 142px; }
.bubble-shape { position: absolute; left: 0; top: 0; }
.bubble p { position: relative; margin: 0; white-space: nowrap; color: #1f5fa6; }
.b-ar { width: 231px; font: 23.500px/36px "DejaVu Sans", sans-serif; top: 17px; transform: scaleY(1.15); }
.b-num { font: 32px/36px "Liberation Sans", sans-serif; left: 22px; top: 18px; color: #1f5a9e; }
```
